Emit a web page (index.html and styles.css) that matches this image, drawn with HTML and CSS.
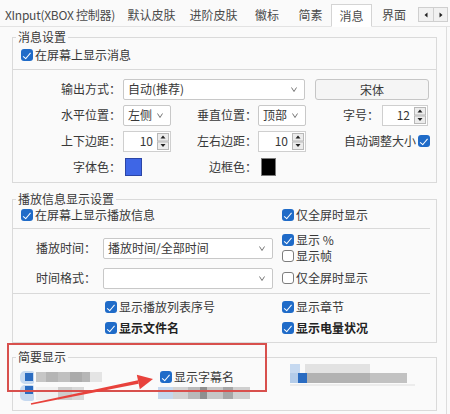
FILE: index.html
```html
<!DOCTYPE html>
<html lang="zh-CN">
<head>
<meta charset="utf-8">
<title>消息</title>
<link rel="stylesheet" href="styles.css">
</head>
<body>
<div class="app">
  <div class="tabbar">
    <div class="tab t1">XInput(XBOX 控制器)</div>
    <div class="tab t2">默认皮肤</div>
    <div class="tab t3">进阶皮肤</div>
    <div class="tab t4">徽标</div>
    <div class="tab t5">简素</div>
    <div class="tab t6 active">消息</div>
    <div class="tab t7">界面</div>
    <div class="tabscroll">
      <span class="sbtn"><svg width="4" height="6" viewBox="0 0 4 6"><path d="M3.5 0.5 L0.5 3 L3.5 5.5 Z" fill="#222"/></svg></span>
      <span class="sbtn"><svg width="4" height="6" viewBox="0 0 4 6"><path d="M0.5 0.5 L3.5 3 L0.5 5.5 Z" fill="#222"/></svg></span>
    </div>
  </div>

  <div class="panel">
    <fieldset class="group g1">
      <legend>消息设置</legend>
      <div class="row-top g1-top"><label class="chk"><span class="cb"></span>在屏幕上显示消息</label></div>
      <div class="sep"></div>
      <div class="form">
        <div class="frow">
          <span class="lbl l1">输出方式：</span>
          <span class="select s-wide"><span>自动(推荐)</span><svg class="chev" width="6" height="5" viewBox="0 0 6 5"><path d="M0.5 0.5 L3 4.5 L5.5 0.5" fill="none" stroke="#666" stroke-width="0.9"/></svg></span>
          <span class="btn">宋体</span>
        </div>
        <div class="frow">
          <span class="lbl l1">水平位置：</span>
          <span class="cell c1"><span class="select s-small"><span>左侧</span><svg class="chev" width="6" height="5" viewBox="0 0 6 5"><path d="M0.5 0.5 L3 4.5 L5.5 0.5" fill="none" stroke="#666" stroke-width="0.9"/></svg></span></span>
          <span class="lbl l2">垂直位置：</span>
          <span class="cell c2"><span class="select s-small"><span>顶部</span><svg class="chev" width="6" height="5" viewBox="0 0 6 5"><path d="M0.5 0.5 L3 4.5 L5.5 0.5" fill="none" stroke="#666" stroke-width="0.9"/></svg></span></span>
          <span class="lbl l3">字号：</span>
          <span class="spin s-font"><span class="num">12</span><svg class="sarr" width="12" height="17" viewBox="0 0 12 17"><rect x="0.5" y="0.5" width="11" height="7.5" fill="#ececec" stroke="#b8b8b8"/><rect x="0.5" y="9" width="11" height="7.5" fill="#ececec" stroke="#b8b8b8"/><path d="M3.5 5.5 L6 2.5 L8.5 5.5Z" fill="#222"/><path d="M3.5 11 L6 14 L8.5 11Z" fill="#222"/></svg></span>
        </div>
        <div class="frow">
          <span class="lbl l1">上下边距：</span>
          <span class="cell c1"><span class="spin"><span class="num">10</span><svg class="sarr" width="12" height="17" viewBox="0 0 12 17"><rect x="0.5" y="0.5" width="11" height="7.5" fill="#ececec" stroke="#b8b8b8"/><rect x="0.5" y="9" width="11" height="7.5" fill="#ececec" stroke="#b8b8b8"/><path d="M3.5 5.5 L6 2.5 L8.5 5.5Z" fill="#222"/><path d="M3.5 11 L6 14 L8.5 11Z" fill="#222"/></svg></span></span>
          <span class="lbl l2">左右边距：</span>
          <span class="cell c2"><span class="spin"><span class="num">10</span><svg class="sarr" width="12" height="17" viewBox="0 0 12 17"><rect x="0.5" y="0.5" width="11" height="7.5" fill="#ececec" stroke="#b8b8b8"/><rect x="0.5" y="9" width="11" height="7.5" fill="#ececec" stroke="#b8b8b8"/><path d="M3.5 5.5 L6 2.5 L8.5 5.5Z" fill="#222"/><path d="M3.5 11 L6 14 L8.5 11Z" fill="#222"/></svg></span></span>
          <span class="lbl l4">自动调整大小</span>
          <span class="cb cb-auto"></span>
        </div>
        <div class="frow">
          <span class="lbl l1">字体色：</span>
          <span class="cell c1"><span class="swatch blue"></span></span>
          <span class="lbl l2">边框色：</span>
          <span class="cell c2"><span class="swatch black"></span></span>
        </div>
      </div>
    </fieldset>

    <fieldset class="group g2">
      <legend>播放信息显示设置</legend>
      <div class="row-top g2-top">
        <label class="chk left-cell"><span class="cb"></span>在屏幕上显示播放信息</label>
        <label class="chk"><span class="cb"></span>仅全屏时显示</label>
      </div>
      <div class="sep sep-short"></div>
      <div class="mid mid-a">
        <span class="lbl lm">播放时间：</span>
        <span class="select s-mid"><span>播放时间/全部时间</span><svg class="chev" width="6" height="5" viewBox="0 0 6 5"><path d="M0.5 0.5 L3 4.5 L5.5 0.5" fill="none" stroke="#666" stroke-width="0.9"/></svg></span>
        <div class="rcol">
          <label class="chk"><span class="cb"></span>显示 %</label>
          <label class="chk"><span class="cb off"></span>显示帧</label>
        </div>
      </div>
      <div class="mid mid-b">
        <span class="lbl lm">时间格式：</span>
        <span class="select s-mid"><span></span><svg class="chev" width="6" height="5" viewBox="0 0 6 5"><path d="M0.5 0.5 L3 4.5 L5.5 0.5" fill="none" stroke="#666" stroke-width="0.9"/></svg></span>
        <div class="rcol">
          <label class="chk"><span class="cb off"></span>仅全屏时显示</label>
        </div>
      </div>
      <div class="sep sep-short sep2"></div>
      <div class="brow brow1">
        <label class="chk bcell"><span class="cb"></span>显示播放列表序号</label>
        <label class="chk"><span class="cb"></span>显示章节</label>
      </div>
      <div class="brow brow2">
        <label class="chk bcell strong"><span class="cb"></span>显示文件名</label>
        <label class="chk strong"><span class="cb"></span>显示电量状况</label>
      </div>
    </fieldset>

    <fieldset class="group g3">
      <legend>简要显示</legend>
      <div class="brief">
        <div class="mos mos-a"><span class="mchk"><span class="mchk-in"></span></span><span class="mbar bar-a"></span></div>
        <label class="chk sub-cell"><span class="cb"></span>显示字幕名</label>
        <div class="mos mos-c">
          <span class="mc-top"></span>
          <span class="mc-bot"></span>
          <span class="mc-line"></span>
        </div>
        <div class="mos mos-b"><span class="mchk tall"><span class="mchk-in"></span></span><span class="mbar bar-b"></span></div>
        <div class="mos mos-d"><span class="mbar bar-d"></span></div>
      </div>
    </fieldset>
  </div>

  <div class="annot-box"></div>
  <svg class="annot-arrow" width="450" height="414" viewBox="0 0 450 414">
    <polygon points="30.84,403.22 137.96,380.33 138.64,383.67 31.16,404.78" fill="#e8423c"/>
    <polygon points="153,379 136.8,374.65 139.8,389.35" fill="#e8423c"/>
  </svg>
</div>
</body>
</html>
```
FILE: styles.css
```css
* { box-sizing: border-box; }
html, body { margin: 0; padding: 0; }
body {
  width: 450px;
  height: 414px;
  overflow: hidden;
  background: #fafafa;
  font-family: "Noto Sans CJK SC", "Microsoft YaHei", sans-serif;
  font-size: 12px;
  line-height: 16px;
  color: #383838;
}
.app { position: relative; width: 450px; height: 414px; overflow: hidden; }

/* tabs */
.tabbar {
  display: flex;
  align-items: flex-end;
  height: 27px;
  border-bottom: 1px solid #e3e3e3;
}
.tab {
  flex: none;
  height: 22px;
  line-height: 22px;
  text-align: center;
  color: #4a4a4a;
  white-space: nowrap;
}
.t1 { width: 120px; letter-spacing: -0.25px; }
.t2 { width: 63px; }
.t3 { width: 61px; }
.t4 { width: 46px; }
.t5 { width: 41px; }
.t6 { width: 41px; }
.t7 { width: 44px; }
.tab.active {
  height: 23px;
  margin-bottom: -1px;
  line-height: 21px;
  background: #fff;
  border: 1px solid #d4d4d4;
  border-bottom-color: #fff;
}
.tabscroll {
  align-self: flex-start;
  margin: 7px 0 0 2px;
  display: flex;
  height: 15px;
  border: 1px solid #cfcfcf;
  background: #f1f1f1;
}
.sbtn { width: 14px; display: flex; align-items: center; justify-content: center; }
.sbtn + .sbtn { border-left: 1px solid #cfcfcf; }

/* panel & groups */
.panel {
  width: 447px;
  height: 387px;
  border-right: 1px solid #dddddd;
  padding-top: 3px;
}
.group {
  margin: 0 9px 0 12px;
  padding: 0;
  border: 1px solid #dadada;
  min-width: 0;
}
.group legend {
  margin-left: 3px;
  padding: 0 2px;
  line-height: 14px;
  color: #383838;
}
.g1 { padding-bottom: 2px; }
.g2 { margin-top: 9px; padding-bottom: 6px; }
.g3 { margin-top: 7px; padding-bottom: 9px; }

.row-top { display: flex; align-items: center; height: 16px; padding-left: 8px; }
.g1-top { margin-top: 3px; }
.g2-top { margin-top: 1px; }
.left-cell { width: 261px; }

.sep { height: 1px; background: #d9d9d9; margin-top: 6px; }
.g2 .sep { margin-top: 5px; margin-right: 6px; }
.g2 .sep2 { margin-top: 4px; }

/* checkbox */
.chk { display: flex; align-items: center; white-space: nowrap; color: #383838; }
.cb {
  flex: none;
  position: relative;
  width: 12px;
  height: 12px;
  margin-right: 2px;
  border-radius: 3px;
  background: #1f6bc8;
}
.cb::after {
  content: "";
  position: absolute;
  left: 4px;
  top: 1.5px;
  width: 3px;
  height: 6.5px;
  border: solid #fff;
  border-width: 0 1.6px 1.6px 0;
  transform: rotate(40deg);
}
.cb.off { background: #fff; border: 1px solid #7d7d7d; }
.cb.off::after { display: none; }
.strong { font-weight: 700; color: #222; }

/* form */
.form { margin-top: 6px; }
.frow { display: flex; align-items: center; height: 26px; }
.lbl { flex: none; text-align: right; white-space: nowrap; }
.l1 { width: 108px; }
.l2 { width: 86px; }
.l3 { width: 73px; }
.l4 { width: 110px; }
.cell { flex: none; display: flex; align-items: center; }
.c1 { width: 50px; padding-left: 2px; }
.c2 { width: 49px; padding-left: 1px; }

.select {
  flex: none;
  display: flex;
  align-items: center;
  justify-content: space-between;
  height: 21px;
  padding: 0 7px 0 4px;
  background: #fff;
  border: 1px solid #c8c8c8;
  border-radius: 2px;
  white-space: nowrap;
}
.s-wide { width: 182px; margin-left: 2px; }
.s-small { width: 48px; }
.s-mid { width: 170px; margin-left: 7px; padding-left: 4px; }
.chev { flex: none; }

.btn {
  flex: none;
  width: 114px;
  height: 21px;
  margin-left: 10px;
  line-height: 19px;
  text-align: center;
  background: #f5f5f5;
  border: 1px solid #c6c6c6;
  border-radius: 3px;
}

.spin {
  flex: none;
  display: flex;
  align-items: center;
  width: 48px;
  height: 21px;
  background: #fff;
  border: 1px solid #cfcfcf;
}
.s-font { width: 46px; margin-left: 3px; }
.spin .num { flex: 1; text-align: right; padding-right: 4px; }
.sarr { flex: none; margin-right: 1px; }

.cb-auto { margin-left: 2px; }

.swatch { display: block; height: 18px; }
.swatch.blue { width: 17px; margin-left: 2px; background: #3e66e6; border: 1px solid #2b45a6; }
.swatch.black { width: 15px; margin-left: 3px; background: #000; border: 1px solid #7a7a7a; }

/* group 2 middle */
.mid { display: flex; align-items: center; }
.mid-a { margin-top: 3px; height: 32px; }
.mid-b { margin-top: 3px; height: 22px; }
.lm { width: 83px; }
.rcol { margin-left: 9px; display: flex; flex-direction: column; }
.rcol .chk { height: 16px; }

.brow { display: flex; align-items: center; height: 16px; padding-left: 92px; margin-top: 5px; }
.bcell { width: 177px; }

/* group 3 (obscured content) */
.brief {
  display: grid;
  grid-template-columns: 138px 132px 140px;
  grid-template-rows: 16px 16px;
  padding-left: 7px;
  margin-top: 5px;
}
.sub-cell { grid-column: 2; grid-row: 1; padding-left: 2px; }
.mos { display: flex; align-items: center; filter: blur(0.6px); }
.mos-a { grid-column: 1; grid-row: 1; }
.mos-b { grid-column: 1; grid-row: 2; }
.mos-c { grid-column: 3; grid-row: 1; margin-top: -5px; height: 22px; display: block; }
.mos-d { grid-column: 2; grid-row: 2; }

.mchk {
  flex: none;
  display: flex;
  align-items: center;
  justify-content: flex-end;
  width: 14px;
  height: 13px;
  padding-right: 1px;
  border-radius: 5px 2px 2px 5px;
  background: #c6d9f0;
}
.mchk.tall { height: 16px; align-items: flex-start; padding-top: 1px; }
.mchk-in { display: block; width: 8px; height: 8px; background: #2b6cc1; }

.mbar { display: block; flex: none; }
.bar-a {
  width: 66px;
  height: 10px;
  margin-left: 2px;
  background: linear-gradient(90deg, #c6c6c6 0 10px, #b5b5b5 10px 22px, #c0c0c0 22px 34px, #ababab 34px 46px, #b6b6b6 46px 54px, #e4e4e4 54px 66px);
}
.bar-b {
  width: 48px;
  height: 13px;
  margin-left: 2px;
  background: linear-gradient(90deg, #f0f0f0 0 22px, #cdcdcd 22px 36px, #d8d8d8 36px 48px);
}
.bar-d {
  width: 92px;
  height: 12px;
  background: linear-gradient(90deg, #c5d8ee 0 15px, #d2d2d2 15px 30px, #b9b9b9 30px 42px, #8f8f8f 42px 49px, #c6c6c6 49px 65px, #a6a6a6 65px 75px, #cfcfcf 75px 92px);
}
.mc-top {
  display: block;
  width: 80px;
  height: 9px;
  background: linear-gradient(90deg, #c6d9f0 0 10px, #fafafa 10px 15px, #e2e2e2 15px 80px);
}
.mc-bot {
  display: block;
  width: 117px;
  height: 10px;
  background: linear-gradient(90deg, #b4cce9 0 8px, #2b6cc1 8px 17px, #b2b2b2 17px 80px, #c2c2c2 80px 117px);
}
.mc-line { display: block; width: 125px; height: 2px; margin-top: 1px; background: #ececec; }

/* annotation overlay */
.annot-box {
  position: absolute;
  left: 7px;
  top: 343px;
  width: 260px;
  height: 49px;
  border: 2px solid #d8504d;
}
.annot-arrow { position: absolute; left: 0; top: 0; pointer-events: none; }
```
